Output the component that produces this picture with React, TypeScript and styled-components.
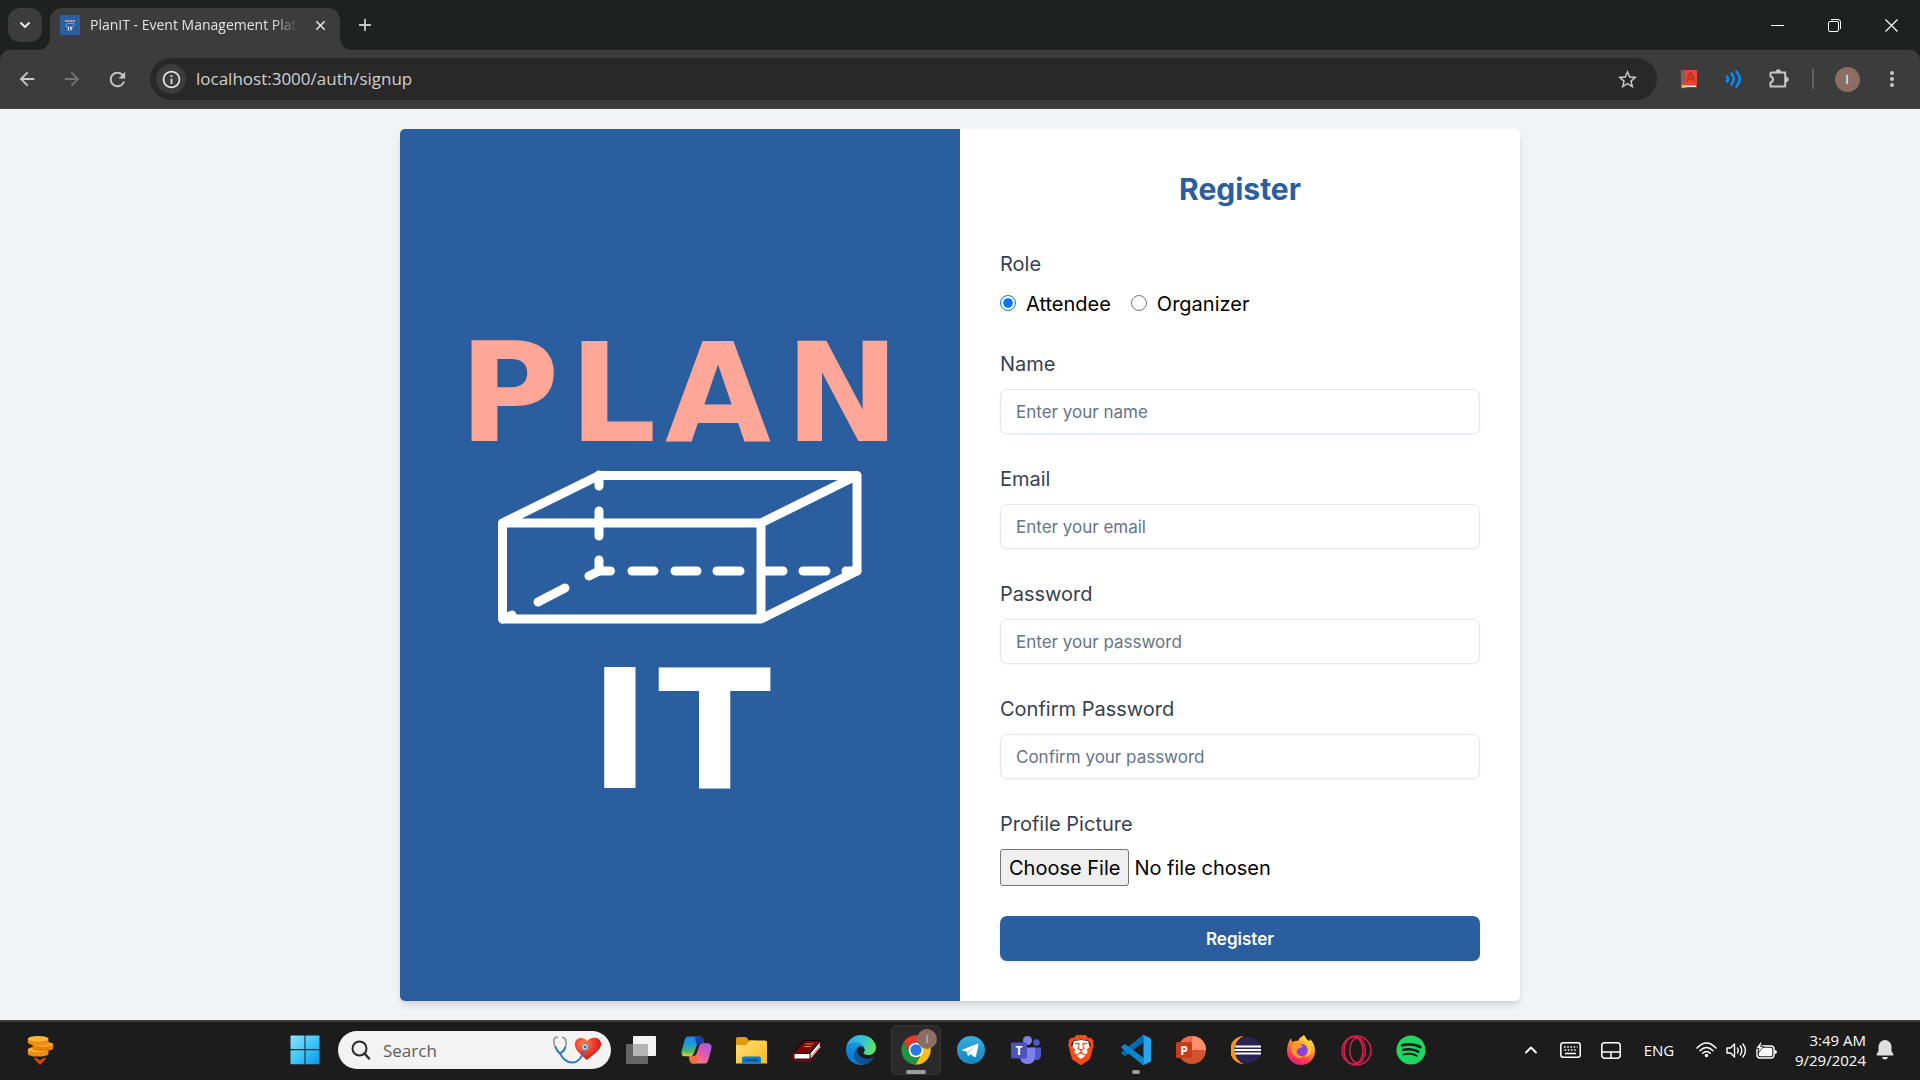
import React, { useState } from "react";
import styled, { createGlobalStyle } from "styled-components";
import { MdArrowBack, MdArrowForward, MdMoreVert, MdOutlineInfo, MdRefresh, MdStarBorder } from "react-icons/md";
import { FaSpotify } from "react-icons/fa";
import { SiBrave } from "react-icons/si";
import { ChevronDown, ChevronUp, Plus, X } from "lucide-react";

const brand = "#2a5e9f";
const uiFont = `"Open Sans", "Noto Sans", sans-serif`;

const GlobalStyle = createGlobalStyle`
  *, *::before, *::after { box-sizing: border-box; }
  body { margin: 0; font-family: Inter, "Liberation Sans", sans-serif; background: #f2f3f5; }
  button, input { font: inherit; color: inherit; }
  svg { display: block; flex: none; }
`;

const Screen = styled.div`
  min-height: 100vh;
  display: flex;
  flex-direction: column;
`;

/* ---------- browser window ---------- */

const BrowserHeader = styled.header`
  background: #1f2120;
  font-family: ${uiFont};
`;

const TabStrip = styled.div`
  height: 50px;
  padding-left: 8px;
  display: flex;
  align-items: center;
`;

const GhostButton = styled.button<{ $size?: number; $color?: string }>`
  width: ${(p) => p.$size ?? 34}px;
  height: ${(p) => p.$size ?? 34}px;
  padding: 0;
  border: 0;
  border-radius: 50%;
  background: transparent;
  color: ${(p) => p.$color ?? "#c7c7c7"};
  display: flex;
  align-items: center;
  justify-content: center;
  flex: none;
`;

const TabSearch = styled(GhostButton)`
  border-radius: 12px;
  background: #3c3c3c;
  color: #e8e8e8;
`;

const Tab = styled.div`
  position: relative;
  align-self: flex-end;
  width: 290px;
  height: 42px;
  margin: 0 8px;
  padding: 0 8px 8px 10px;
  border-radius: 12px 12px 0 0;
  background: #3c3c3c;
  display: flex;
  align-items: center;
  gap: 10px;

  &::before,
  &::after {
    content: "";
    position: absolute;
    bottom: 0;
    width: 12px;
    height: 12px;
  }
  &::before {
    right: 100%;
    background: radial-gradient(circle at 0 0, transparent 12px, #3c3c3c 12px);
  }
  &::after {
    left: 100%;
    background: radial-gradient(circle at 100% 0, transparent 12px, #3c3c3c 12px);
  }
`;

const TabTitle = styled.span`
  flex: 1;
  min-width: 0;
  white-space: nowrap;
  font-size: 14px;
  line-height: 22px;
  color: #e3e3e3;
  mask-image: linear-gradient(to right, #000 88%, transparent);
`;

const WindowControls = styled.div`
  margin-left: auto;
  height: 100%;
  display: flex;
`;

const WindowButton = styled.button`
  width: 57px;
  padding: 0;
  border: 0;
  background: transparent;
  color: #fff;
  display: flex;
  align-items: center;
  justify-content: center;
`;

const Toolbar = styled.div`
  height: 59px;
  padding: 0 11px 0 10px;
  border-radius: 10px 10px 0 0;
  border-bottom: 1px solid #4a4a4a;
  background: #3c3c3c;
  display: flex;
  align-items: center;
`;

const NavButtons = styled.div`
  display: flex;
  gap: 11px;
  margin-right: 16px;
`;

const Omnibox = styled.div`
  flex: 1;
  height: 42px;
  padding: 0 13px 0 6px;
  border-radius: 21px;
  background: #282828;
  display: flex;
  align-items: center;
`;

const SiteInfo = styled(GhostButton)`
  background: #3c3c3c;
  color: #e3e3e3;
`;

const AddressInput = styled.input`
  flex: 1;
  min-width: 0;
  padding: 0;
  margin: 0 10px;
  border: 0;
  outline: 0;
  font-size: 17px;
  line-height: 26px;
  color: #d0d0d0;
  background: transparent;
`;

const Extensions = styled.div`
  margin-left: 15px;
  display: flex;
  align-items: center;
  gap: 11px;
`;

const Divider = styled.span`
  width: 2px;
  height: 20px;
  margin: 0 5px;
  background: #5f5f5f;
`;

const Avatar = styled.span`
  width: 25px;
  height: 25px;
  border-radius: 50%;
  background: #8d6e63;
  color: #fff;
  font-size: 13px;
  line-height: 25px;
  text-align: center;
`;

/* ---------- sign-up page ---------- */

const Page = styled.main`
  flex: 1;
  padding: 20px 20px 16px;
  display: flex;
  justify-content: center;
  align-items: flex-start;
  background: #f2f3f5;
`;

const Card = styled.section`
  width: 100%;
  max-width: 1120px;
  border-radius: 5px;
  overflow: hidden;
  background: #fff;
  box-shadow: 0 5px 8px -1px rgba(0, 0, 0, 0.1), 0 2px 5px -2px rgba(0, 0, 0, 0.1);
  display: grid;
  grid-template-columns: 1fr 1fr;
`;

const BrandPanel = styled.div`
  background: ${brand};
  display: flex;
  align-items: center;
  justify-content: center;
`;

const Form = styled.form`
  padding: 40px;
  display: flex;
  flex-direction: column;
  gap: 30px;
`;

const Title = styled.h1`
  margin: 0 0 10px;
  font-size: 30px;
  line-height: 40px;
  font-weight: 700;
  text-align: center;
  color: ${brand};
`;

const Field = styled.div`
  display: flex;
  flex-direction: column;
  gap: 10px;
`;

const FieldSet = styled.fieldset`
  margin: 0;
  padding: 0;
  border: 0;
`;

const labelText = `
  font-size: 20px;
  line-height: 30px;
  color: #374151;
`;

const Label = styled.label`
  ${labelText}
`;

const Legend = styled.legend`
  ${labelText}
  padding: 0;
  margin-bottom: 10px;
`;

const Options = styled.div`
  display: flex;
  gap: 20px;
`;

const Option = styled.label`
  display: flex;
  align-items: center;
  gap: 10px;
  font-size: 20px;
  line-height: 30px;
  color: #000;
`;

const Radio = styled.input`
  width: 16px;
  height: 16px;
  margin: 0 0 3px;
`;

const TextInput = styled.input`
  width: 100%;
  height: 45px;
  padding: 0 15px;
  border: 1px solid #e2e8f0;
  border-radius: 7px;
  background: #fff;
  box-shadow: 0 1px 3px rgba(0, 0, 0, 0.05);
  font-size: 17px;
  color: #0f172a;

  &::placeholder {
    color: #64748b;
    opacity: 1;
  }
`;

const FileInput = styled.input`
  height: 37px;
  font-size: 20px;
  line-height: 30px;
  color: #000;

  &::file-selector-button {
    height: 37px;
    margin: 0 5px 0 0;
    padding: 0 8px;
    border: 1px solid #767676;
    border-radius: 3px;
    background: #efefef;
    color: #000;
    font: inherit;
  }
`;

const SubmitButton = styled.button`
  height: 45px;
  border: 0;
  border-radius: 7px;
  background: ${brand};
  color: #fff;
  font-size: 17px;
  font-weight: 600;
  box-shadow: 0 1px 3px rgba(0, 0, 0, 0.1);
`;

/* ---------- taskbar ---------- */

const Taskbar = styled.footer`
  height: 60px;
  background: #1c1c1c;
  box-shadow: inset 0 2px #3a3a3a;
  font-family: ${uiFont};
  color: #fff;
  display: flex;
  align-items: center;
`;

const Widgets = styled.div`
  width: 280px;
  padding-left: 15px;
  flex: 0 1 auto;
`;

const Apps = styled.nav`
  display: flex;
  align-items: center;
  gap: 5px;
`;

const AppButton = styled.button<{ $active?: boolean }>`
  position: relative;
  width: 50px;
  height: 50px;
  padding: 0;
  border: 1px solid ${(p) => (p.$active ? "#343434" : "transparent")};
  border-radius: 6px;
  background: ${(p) => (p.$active ? "#2a2a2a" : "transparent")};
  display: flex;
  align-items: center;
  justify-content: center;
  flex: none;
`;

const RunningMark = styled.span<{ $width: number }>`
  position: absolute;
  bottom: 0;
  left: 50%;
  width: ${(p) => p.$width}px;
  height: 4px;
  margin-left: ${(p) => -p.$width / 2}px;
  border-radius: 2px;
  background: #9d9d9d;
`;

const ProfileBadge = styled.span`
  position: absolute;
  top: 3px;
  right: 3px;
  width: 20px;
  height: 20px;
  border-radius: 50%;
  background: #8d6e63;
  color: #d8c8c2;
  font-size: 11px;
  line-height: 20px;
`;

const SearchBox = styled.label`
  width: 273px;
  height: 38px;
  margin: 0 0 0 3px;
  padding: 0 9px 0 13px;
  border-radius: 19px;
  background: #f3f3f3;
  display: flex;
  align-items: center;
  gap: 12px;
`;

const SearchInput = styled.input`
  flex: 1;
  min-width: 0;
  padding: 0;
  border: 0;
  outline: 0;
  background: transparent;
  font-size: 17px;
  color: #5c5c5c;

  &::placeholder {
    color: #5c5c5c;
    opacity: 1;
  }
`;

const Tray = styled.div`
  margin-left: auto;
  padding-right: 24px;
  display: flex;
  align-items: center;
`;

const TrayButton = styled.button<{ $width?: number }>`
  min-width: ${(p) => p.$width ?? 40}px;
  height: 40px;
  padding: 0;
  border: 0;
  background: transparent;
  font-size: 15px;
  color: #fff;
  display: flex;
  align-items: center;
  justify-content: center;
  gap: 9px;
`;

const Clock = styled.time`
  margin: 0 8px;
  font-size: 15px;
  line-height: 20px;
  text-align: right;
`;

/* ---------- drawings ---------- */

const PlanItLogo = () => (
  <svg width="480" height="530" viewBox="440 300 480 530" role="img" aria-label="Plan It">
    <g fontFamily="DejaVu Sans, Verdana, sans-serif" fontWeight="700">
      <text x="459 569 665 785" y="441" fontSize="137" fill="#fea698">PLAN</text>
      <text x="589 658" y="788" fontSize="166" fill="#fff">IT</text>
    </g>
    <g fill="none" stroke="#fff" strokeWidth="9" strokeLinejoin="round" strokeLinecap="round">
      <path d="M502.5 523H761V619H502.5Z M502.5 523L599 475.500H857V571L761 619 M761 523L857 475.500" />
      <path d="M599 475V486 M599 511V536 M599 560V571H610.500 M632 571H654 M675 571H697 M717 571H740 M765 571H783 M803 571H826 M846 571H857" />
      <path d="M599 571L589 576 M565 588L538 602 M512 615L503 619" />
    </g>
  </svg>
);

const Favicon = () => (
  <svg width="20" height="20" viewBox="0 0 20 20">
    <rect width="20" height="20" fill={brand} />
    <path d="M5 6h10" stroke="#c99aa6" strokeWidth="2" strokeDasharray="2 .6" />
    <path d="M6 9.500l2-1h6v2l-2 1.500H6z" fill="none" stroke="#9db8d8" strokeWidth=".7" />
    <path d="M8.500 12.500v3M11 12.500v3M10 12.800h2.400" stroke="#fff" strokeWidth="1.100" />
  </svg>
);

const RestoreIcon = () => (
  <svg width="13" height="13" viewBox="0 0 13 13" fill="none" stroke="#fff">
    <rect x=".5" y="2.500" width="10" height="10" rx="1.500" />
    <path d="M3 .5h7a2.500 2.500 0 0 1 2.500 2.500v7" />
  </svg>
);

const DictionaryIcon = () => (
  <svg width="18" height="20" viewBox="0 0 20 22">
    <rect x="1" y="1" width="18" height="20" rx="1" fill="#c5281c" />
    <rect x="1" y="1" width="4" height="20" fill="#6b6b6b" />
    <rect x="5" y="1" width="14" height="16.500" fill="#e94335" />
    <path d="M7.500 14L11 4.500h1.500L16 14M9 11h5.500" stroke="#bb3025" strokeWidth="1.800" fill="none" />
    <path d="M6 19h12" stroke="#fff" strokeWidth="1.600" />
    <path d="M2 17.500h4.500v4l-2-1-2.500 1z" fill="#f2b630" />
  </svg>
);

const WavesIcon = () => (
  <svg width="20" height="20" viewBox="0 0 20 20" fill="none" stroke="#0a8bf5" strokeWidth="2.600" strokeLinecap="round">
    <path d="M3 7.500q2 2.500 0 5" />
    <path d="M7.500 4.500q4.500 5.500 0 11" />
    <path d="M12.500 2.500q6.500 7.500 0 15" />
  </svg>
);

const PuzzleIcon = () => (
  <svg width="22" height="22" viewBox="0 0 22 22">
    <path
      d="M3.500 4.500H17.200V18.500H2.500V14.400Q5 14 5 11.500T2.500 8.600V5.500Q2.500 4.500 3.500 4.500Z"
      fill="none"
      stroke="#c7c7c7"
      strokeWidth="2"
      strokeLinejoin="round"
    />
    <path d="M8 4a2.300 2.300 0 0 1 4.600 0zM18 9.200a2.300 2.300 0 0 1 0 4.600z" fill="#c7c7c7" stroke="#c7c7c7" />
  </svg>
);

const CoinsIcon = () => (
  <svg width="30" height="30" viewBox="0 0 30 32">
    <path d="M2 15v5c0 4 22 4 22 0v-5z" fill="#f08c12" />
    <ellipse cx="13" cy="15.500" rx="11" ry="3" fill="#ffb02e" />
    <path d="M7 9v5c0 4 22 4 22 0V9z" fill="#e57f0c" />
    <ellipse cx="18" cy="10" rx="11" ry="3" fill="#ffa21f" />
    <path d="M2 4v4c0 4 22 4 22 0V4z" fill="#f08c12" />
    <ellipse cx="13" cy="4" rx="11" ry="3" fill="#ffb938" />
    <path d="M10 24l5 3 5-3q2 1 0 3l-5 5-5-5q-2-2 0-3z" fill="#d5440f" />
  </svg>
);

const WindowsIcon = () => (
  <svg width="30" height="30" viewBox="0 0 30 30">
    <defs>
      <linearGradient id="win" x1="0" y1="0" x2="1" y2="1" gradientUnits="objectBoundingBox">
        <stop offset="0" stopColor="#8be2fb" />
        <stop offset=".5" stopColor="#3ec8fb" />
        <stop offset="1" stopColor="#0896fa" />
      </linearGradient>
    </defs>
    <path d="M1 .5h13.500V14H.5V1zM15.500.5H29l.5.5v13h-14zM.5 15.200h14v14H1l-.5-.5zM15.500 15.200h14v13.500l-.5.500H15.500z" fill="url(#win)" />
  </svg>
);

const MagnifierIcon = () => (
  <svg width="20" height="20" viewBox="0 0 20 20" fill="none" stroke="#2b2b2b" strokeWidth="2" strokeLinecap="round">
    <circle cx="8.500" cy="8.500" r="7" />
    <path d="M13.500 13.500L18 18.500" strokeWidth="2.400" />
  </svg>
);

const HeartIcon = () => (
  <svg width="50" height="28" viewBox="0 0 50 28">
    <defs>
      <radialGradient id="heart" cx=".35" cy=".3" r=".8">
        <stop offset="0" stopColor="#ff8a5c" />
        <stop offset=".5" stopColor="#ee3a2a" />
        <stop offset="1" stopColor="#b80f14" />
      </radialGradient>
    </defs>
    <path d="M35 24C26 17 22 12 23 7C24 2 31 0 35 5C40 0 48 1 49 7C50 13 43 17 35 24Z" fill="url(#heart)" />
    <path d="M6 1.500Q1 0 2 7Q3 14 8 17Q13 16 14 9Q14.500 1 10 1.500" fill="none" stroke="#8b9098" strokeWidth="1.600" />
    <path d="M3.500 10.500Q5 15.500 8 17.500Q12 15.500 13.200 11M8 17.500Q13 27 21 26.500Q29 26 32.500 12.500" fill="none" stroke="#2f78bd" strokeWidth="1.800" />
    <circle cx="33" cy="11" r="3.600" fill="#c3cad2" stroke="#6d7680" />
    <circle cx="33" cy="11" r="1.300" fill="#59636e" />
  </svg>
);

const TaskViewIcon = () => (
  <svg width="30" height="30" viewBox="0 0 30 30">
    <rect x="0" y="9" width="22" height="20" rx="1" fill="#666" />
    <rect x="7" y="1" width="23" height="20" rx="1" fill="#f3f3f3" />
    <path d="M7 9h15v12H7z" fill="#b5b5b5" />
  </svg>
);

const CopilotIcon = () => (
  <svg width="31" height="28" viewBox="0 0 32 28">
    <defs>
      <linearGradient id="copA" x1="0" y1="0" x2="0" y2="1">
        <stop offset="0" stopColor="#1a86ee" />
        <stop offset=".45" stopColor="#1f9fd0" />
        <stop offset=".75" stopColor="#4fb56a" />
        <stop offset="1" stopColor="#e8d52a" />
      </linearGradient>
      <linearGradient id="copB" x1="1" y1="0" x2="0" y2="1">
        <stop offset="0" stopColor="#9a5cf0" />
        <stop offset=".5" stopColor="#ea5aa5" />
        <stop offset="1" stopColor="#ff9a4a" />
      </linearGradient>
    </defs>
    <path d="M7 0H19Q22 0 23 3L24 7H20Q17 7 16 10L13 18Q12 20.500 9 20.500H4Q-1 20 1 14L4 3Q5 0 7 0Z" fill="url(#copA)" />
    <path d="M16 0H19Q22 0 23 3L24 7H20Q17.500 7 16.500 9L15 5Q14 1 16 0Z" fill="#143fae" />
    <path d="M25 28H13Q10 28 9 25L8 20.500H12Q15 20.500 16 18L19 9Q20 7 23 7H28Q33 8 31 14L28 25Q27 28 25 28Z" fill="url(#copB)" />
    <path d="M14 28H13Q10 28 9 25L8 20.500H12Q14.500 20.500 15.500 19L17 23Q18 28 14 28Z" fill="#f36a3d" />
  </svg>
);

const ExplorerIcon = () => (
  <svg width="31" height="27" viewBox="0 0 31 27">
    <defs>
      <linearGradient id="folder" x1="0" y1="0" x2="1" y2="1">
        <stop offset="0" stopColor="#ffe07a" />
        <stop offset="1" stopColor="#fcb91a" />
      </linearGradient>
    </defs>
    <path d="M0 2Q0 0 2 0H10L13 3.500H20V12H0Z" fill="#dd9c08" />
    <path d="M0 8H10L14 3.500H29Q31 3.500 31 5.500V26.500H0Z" fill="url(#folder)" />
    <path d="M6 26.500V21.500Q6 19.500 8 19.500H23Q25 19.500 25 21.500V26.500Z" fill="#0b7bd0" />
    <path d="M9.500 23H21.500" stroke="#07477d" strokeWidth="1.400" strokeLinecap="round" />
  </svg>
);

const BookIcon = () => (
  <svg width="31" height="23" viewBox="0 0 31 23" strokeLinejoin="round">
    <path d="M3 13.500L13 1.500H30L19 14Z" fill="#7c0806" stroke="#000" />
    <path d="M19.500 14.500L30 2Q27.500 5 29.500 8.500L20 20Z" fill="#f4f4f4" />
    <path d="M20.500 17L28.500 7M20.500 19L29 9" stroke="#777" strokeWidth=".7" />
    <path d="M3.500 15H18.500V19.500H3.500Z" fill="#fff" />
    <path d="M19 14H4Q.5 14.500 1 18Q1.500 21 4 21.500H19L29.500 9" fill="none" stroke="#7c0806" strokeWidth="1.500" />
    <path d="M14.500 5H22.500M13 7.500H20.500" stroke="#c98a18" strokeWidth="1.200" />
  </svg>
);

const EdgeIcon = () => (
  <svg width="30" height="30" viewBox="0 0 256 256">
    <defs>
      <linearGradient id="edgeA" x1="0" y1=".5" x2="1" y2=".5">
        <stop offset="0" stopColor="#0c59a4" />
        <stop offset="1" stopColor="#114a8b" />
      </linearGradient>
      <linearGradient id="edgeB" x1=".6" y1="0" x2=".3" y2="1">
        <stop offset="0" stopColor="#1b9de2" />
        <stop offset=".5" stopColor="#1183d8" />
        <stop offset="1" stopColor="#0078d4" />
      </linearGradient>
      <linearGradient id="edgeC" x1="0" y1=".3" x2="1" y2=".6">
        <stop offset="0" stopColor="#35a8f0" />
        <stop offset=".5" stopColor="#2fc3d8" />
        <stop offset="1" stopColor="#6be455" />
      </linearGradient>
    </defs>
    <path fill="url(#edgeA)" d="M231 190.500a93.700 93.700 0 0 1-10.500 4.700 101.900 101.900 0 0 1-35.900 6.500c-47.300 0-88.500-32.500-88.500-74.300a31.500 31.500 0 0 1 16.400-27.300c-42.800 1.800-53.800 46.400-53.800 72.500 0 73.900 68.100 81.400 82.800 81.400 7.900 0 19.800-2.300 27-4.600l1.300-.4a128.300 128.300 0 0 0 66.600-52.800 4 4 0 0 0-5.400-5.700z" />
    <path fill="url(#edgeB)" d="M105.700 241.400a79.200 79.200 0 0 1-22.700-21.300 80.700 80.700 0 0 1 29.500-120c3.100-1.500 8.500-4.100 15.500-4a32.400 32.400 0 0 1 25.700 13 31.900 31.900 0 0 1 6.400 18.700c0-.2 24.500-79.600-80-79.600-43.900 0-80 41.700-80 78.200a130.200 130.200 0 0 0 12.100 56 128 128 0 0 0 156.400 67.100 75.600 75.600 0 0 1-62.800-8z" />
    <path fill="url(#edgeC)" d="M152.300 148.900c-.8 1-3.300 2.500-3.300 5.700 0 2.600 1.700 5.100 4.700 7.200 14.400 10 41.500 8.700 41.600 8.700a59.600 59.600 0 0 0 30.300-8.400A61.400 61.400 0 0 0 256 109.200c.3-22.400-8-37.300-11.300-43.900C223.500 23.800 177.700 0 128 0A128 128 0 0 0 0 126.200c.5-36.500 36.800-66 80-66 3.500 0 23.500.3 42 10 16.300 8.600 24.900 19 30.900 29.300 6.200 10.700 7.300 24.200 7.300 29.500s-2.700 13.300-7.900 19.900z" />
  </svg>
);

const ChromeIcon = () => (
  <svg width="32" height="32" viewBox="0 0 48 48">
    <path d="M5.540 12.030A22 22 0 0 1 43.600 14H24L15.340 29Z" fill="#e33b2e" />
    <path d="M43.600 14A22 22 0 0 1 22.860 45.970L32.660 29L24 14Z" fill="#fbc116" />
    <path d="M22.860 45.970A22 22 0 0 1 5.540 12.030L15.340 29H32.660Z" fill="#229342" />
    <circle cx="24" cy="24" r="11" fill="#fff" />
    <circle cx="24" cy="24" r="8.500" fill="#2a78e8" />
  </svg>
);

const TelegramIcon = () => (
  <svg width="28" height="28" viewBox="0 0 28 28">
    <defs>
      <linearGradient id="tg" x1="0" y1="0" x2="0" y2="1">
        <stop offset="0" stopColor="#37aee2" />
        <stop offset="1" stopColor="#1583bd" />
      </linearGradient>
    </defs>
    <circle cx="14" cy="14" r="14" fill="url(#tg)" />
    <path d="M5 13.800L20.500 7.800Q21.600 7.600 21.400 9L19 20.300Q18.600 21.500 17.400 20.900L13.500 18L11.600 19.900Q11 20.300 10.800 19.500L9.500 15.600L5.400 14.400Q4.500 14.100 5 13.800Z" fill="#fff" />
    <path d="M9.500 15.600L18.300 9.900L11.700 16.300L11.300 19.800Z" fill="#b9d6e8" />
  </svg>
);

const TeamsIcon = () => (
  <svg width="30" height="28" viewBox="0 0 30 28">
    <circle cx="25.500" cy="6.500" r="3.200" fill="#5059c9" />
    <path d="M20 11.500H30V19Q30 24 25 24Q21 24 20 20Z" fill="#5059c9" />
    <circle cx="16.500" cy="4.500" r="4.500" fill="#7b83eb" />
    <path d="M9 11.500H24V20Q24 28 16.500 28Q9 28 9 20Z" fill="#7b83eb" />
    <rect y="6.500" width="16" height="16" rx="1.500" fill="#4b53bc" />
    <text x="8" y="19" textAnchor="middle" fontFamily="Open Sans, sans-serif" fontSize="12" fontWeight="700" fill="#fff">T</text>
  </svg>
);

const BraveIcon = () => (
  <svg width="30" height="30" viewBox="0 0 30 30">
    <path d="M8 6L15 5L22 6L24 13L21 21L15 26L9 21L6 13Z" fill="#fff" />
    <SiBrave size={30} color="#fb4a16" />
  </svg>
);

const VsCodeIcon = () => (
  <svg width="30" height="30" viewBox="0 0 100 100">
    <path d="M2 62L9 68Q12 71 16 68L76 23V0Q72 0 69 3L2 57Q-1 59 2 62Z" fill="#0769b0" />
    <path d="M2 38L9 32Q12 29 16 32L76 77V100Q72 100 69 97L2 43Q-1 41 2 38Z" fill="#0a86d1" />
    <path d="M76 0L97 10Q100 12 100 15V85Q100 88 97 90L76 100Q72 101 69 98Q75 101 75 94V6Q75 -1 69 2Q72 -1 76 0Z" fill="#25a5ee" />
  </svg>
);

const PowerPointIcon = () => (
  <svg width="30" height="28" viewBox="0 0 30 28">
    <circle cx="16" cy="14" r="14" fill="#d35230" />
    <path d="M16 0A14 14 0 0 0 2 14H16Z" fill="#ed6c47" />
    <path d="M16 0A14 14 0 0 1 30 14H16Z" fill="#ff8f6b" />
    <rect y="6" width="16" height="16" rx="1.500" fill="#c43e1c" />
    <text x="8" y="18.500" textAnchor="middle" fontFamily="Open Sans, sans-serif" fontSize="12" fontWeight="700" fill="#fff">P</text>
  </svg>
);

const EclipseIcon = () => (
  <svg width="30" height="28" viewBox="0 0 30 28">
    <path d="M13 0A14 14 0 0 0 13 28A15 15 0 0 1 13 0Z" fill="#f7941e" />
    <circle cx="17" cy="14" r="13" fill="#2c2255" />
    <path d="M4 10.500H30M3.500 14H30M4 17.500H30" stroke="#fff" strokeWidth="2" />
  </svg>
);

const FirefoxIcon = () => (
  <svg width="30" height="30" viewBox="0 0 30 30">
    <defs>
      <linearGradient id="fox" x1=".8" y1="0" x2=".3" y2="1">
        <stop offset="0" stopColor="#fff44f" />
        <stop offset=".4" stopColor="#ff9a2a" />
        <stop offset=".75" stopColor="#ff3b4f" />
        <stop offset="1" stopColor="#e3158a" />
      </linearGradient>
    </defs>
    <path d="M18 0Q20 4 23 6Q24 6 24 4Q29 9 29 16A14 14 0 0 1 1 16Q1 9 5 3Q5 6 7 7Q9 5 12 6Q14 2 18 0Z" fill="url(#fox)" />
    <circle cx="15.500" cy="15" r="6" fill="#8a3fe0" />
    <path d="M5 11Q9 8 13 9L17 11Q15 13 12.500 13.500Q10 15 11 18Q13 22 18 21Q12 26 7.500 20Q4.500 16 5 11Z" fill="#ff9a2a" />
    <path d="M17 6Q23 8 23 15Q22 20 18 22Q23 22 25 17Q26 11 22 6Q19 4 18 2Z" fill="#ffd23e" />
  </svg>
);

const OperaGxIcon = () => (
  <svg width="31" height="31" viewBox="0 0 31 31" fill="none" stroke="#e0204e" strokeWidth="1.400">
    <circle cx="15.500" cy="15.500" r="14.500" />
    <ellipse cx="12.500" cy="15.500" rx="9.500" ry="13.700" />
    <ellipse cx="16.500" cy="15.500" rx="7.800" ry="12.500" />
  </svg>
);

const KeyboardIcon = () => (
  <svg width="21" height="16" viewBox="0 0 21 16" fill="none" stroke="#fff" strokeWidth="1.500">
    <rect x=".8" y=".8" width="19.400" height="14.400" rx="2.500" />
    <path d="M4 5H17.500M4.500 8H17" strokeWidth="1.600" strokeDasharray="1.600 1.600" />
    <path d="M5 11.500H16" />
  </svg>
);

const TouchpadIcon = () => (
  <svg width="20" height="17" viewBox="0 0 20 17" fill="none" stroke="#fff" strokeWidth="1.500">
    <rect x=".8" y=".8" width="18.400" height="15.400" rx="3" />
    <path d="M1 10H19M10 10V16" />
  </svg>
);

const WifiIcon = () => (
  <svg width="21" height="16" viewBox="0 0 21 16" fill="none" stroke="#fff" strokeWidth="1.500" strokeLinecap="round">
    <path d="M1 6Q10.500 -4 20 6M4 8.700Q10.500 2.200 17 8.700M6.700 11.300Q10.500 7.700 14.300 11.300" />
    <circle cx="10.500" cy="13.500" r="1.700" fill="#fff" stroke="none" />
  </svg>
);

const VolumeIcon = () => (
  <svg width="21" height="17" viewBox="0 0 21 17" fill="none" stroke="#fff" strokeWidth="1.400" strokeLinecap="round" strokeLinejoin="round">
    <path d="M1 6H4.500L8.500 2V15L4.500 11H1Z" />
    <path d="M11.500 6Q13 8.500 11.500 11M14.300 4Q17.200 8.500 14.300 13M17 2Q21.800 8.500 17 15" />
  </svg>
);

const BatteryIcon = () => (
  <svg width="21" height="17" viewBox="0 0 21 17">
    <rect x="1" y="4" width="17" height="12" rx="3" fill="none" stroke="#fff" strokeWidth="1.400" />
    <rect x="2.800" y="5.800" width="13.400" height="8.400" rx="1.500" fill="#fff" />
    <path d="M18.500 8q2.500 0 2.500 2t-2.500 2z" fill="#fff" />
    <path d="M4.500 0L0 6.500H3L2 11.500L7.500 4.500H4.500L6 0Z" fill="#fff" stroke="#1c1c1c" strokeWidth=".8" />
  </svg>
);

const BellIcon = () => (
  <svg width="18" height="20" viewBox="0 0 18 20" fill="#dedede">
    <path d="M9 0A6.500 6.500 0 0 1 15.500 6.500V11L17.500 14.500Q17.500 15.500 16.500 15.500H1.500Q.5 15.500 .5 14.500L2.500 11V6.500A6.500 6.500 0 0 1 9 0ZM6 17H12Q11.500 19.500 9 19.500T6 17Z" />
  </svg>
);

/* ---------- content ---------- */

const textFields = [
  { id: "name", label: "Name", type: "text", placeholder: "Enter your name" },
  { id: "email", label: "Email", type: "email", placeholder: "Enter your email" },
  { id: "password", label: "Password", type: "password", placeholder: "Enter your password" },
  { id: "confirm", label: "Confirm Password", type: "password", placeholder: "Confirm your password" },
];

const roles = ["Attendee", "Organizer"];

const apps = [
  { name: "Task View", icon: <TaskViewIcon /> },
  { name: "Copilot", icon: <CopilotIcon /> },
  { name: "File Explorer", icon: <ExplorerIcon /> },
  { name: "Dictionary", icon: <BookIcon /> },
  { name: "Edge", icon: <EdgeIcon /> },
  { name: "Chrome", icon: <ChromeIcon />, active: true, mark: 20, badge: "I" },
  { name: "Telegram", icon: <TelegramIcon /> },
  { name: "Teams", icon: <TeamsIcon /> },
  { name: "Brave", icon: <BraveIcon /> },
  { name: "Visual Studio Code", icon: <VsCodeIcon />, mark: 8 },
  { name: "PowerPoint", icon: <PowerPointIcon /> },
  { name: "Eclipse", icon: <EclipseIcon /> },
  { name: "Firefox", icon: <FirefoxIcon /> },
  { name: "Opera GX", icon: <OperaGxIcon /> },
  { name: "Spotify", icon: <FaSpotify size={30} color="#1ed760" /> },
];

function Browser() {
  return (
    <BrowserHeader>
      <TabStrip>
        <TabSearch aria-label="Search tabs"><ChevronDown size={16} strokeWidth={3} /></TabSearch>
        <Tab>
          <Favicon />
          <TabTitle>PlanIT - Event Management Plat</TabTitle>
          <GhostButton $size={24} $color="#e3e3e3" aria-label="Close tab"><X size={15} strokeWidth={2.5} /></GhostButton>
        </Tab>
        <GhostButton aria-label="New tab"><Plus size={18} strokeWidth={2.5} /></GhostButton>
        <WindowControls>
          <WindowButton aria-label="Minimize">
            <svg width="13" height="1" viewBox="0 0 13 1"><path d="M0 .5H13" stroke="#fff" /></svg>
          </WindowButton>
          <WindowButton aria-label="Restore"><RestoreIcon /></WindowButton>
          <WindowButton aria-label="Close">
            <svg width="13" height="13" viewBox="0 0 13 13"><path d="M.5 .5L12.500 12.500M12.500 .5L.5 12.500" stroke="#fff" strokeWidth="1.200" /></svg>
          </WindowButton>
        </WindowControls>
      </TabStrip>
      <Toolbar>
        <NavButtons>
          <GhostButton aria-label="Back"><MdArrowBack size={22} /></GhostButton>
          <GhostButton aria-label="Forward" $color="#757575"><MdArrowForward size={22} /></GhostButton>
          <GhostButton aria-label="Reload"><MdRefresh size={23} /></GhostButton>
        </NavButtons>
        <Omnibox>
          <SiteInfo $size={30} aria-label="Site information"><MdOutlineInfo size={21} /></SiteInfo>
          <AddressInput aria-label="Address" defaultValue="localhost:3000/auth/signup" />
          <GhostButton aria-label="Bookmark"><MdStarBorder size={23} /></GhostButton>
        </Omnibox>
        <Extensions>
          <GhostButton aria-label="Dictionary extension"><DictionaryIcon /></GhostButton>
          <GhostButton aria-label="Read aloud extension"><WavesIcon /></GhostButton>
          <GhostButton aria-label="Extensions"><PuzzleIcon /></GhostButton>
          <Divider />
          <GhostButton aria-label="Profile"><Avatar>I</Avatar></GhostButton>
          <GhostButton aria-label="Menu"><MdMoreVert size={24} /></GhostButton>
        </Extensions>
      </Toolbar>
    </BrowserHeader>
  );
}

function SignUp() {
  const [role, setRole] = useState("Attendee");
  return (
    <Page>
      <Card>
        <BrandPanel><PlanItLogo /></BrandPanel>
        <Form onSubmit={(e: React.FormEvent) => e.preventDefault()}>
          <Title>Register</Title>
          <FieldSet>
            <Legend>Role</Legend>
            <Options>
              {roles.map((r) => (
                <Option key={r}>
                  <Radio type="radio" name="role" checked={role === r} onChange={() => setRole(r)} />
                  {r}
                </Option>
              ))}
            </Options>
          </FieldSet>
          {textFields.map((f) => (
            <Field key={f.id}>
              <Label htmlFor={f.id}>{f.label}</Label>
              <TextInput id={f.id} type={f.type} placeholder={f.placeholder} />
            </Field>
          ))}
          <Field>
            <Label htmlFor="picture">Profile Picture</Label>
            <FileInput id="picture" type="file" />
          </Field>
          <SubmitButton type="submit">Register</SubmitButton>
        </Form>
      </Card>
    </Page>
  );
}

function SystemBar() {
  return (
    <Taskbar>
      <Widgets><AppButton aria-label="Widgets"><CoinsIcon /></AppButton></Widgets>
      <Apps>
        <AppButton aria-label="Start"><WindowsIcon /></AppButton>
        <SearchBox>
          <MagnifierIcon />
          <SearchInput type="text" placeholder="Search" aria-label="Search" />
          <HeartIcon />
        </SearchBox>
        {apps.map((a) => (
          <AppButton key={a.name} aria-label={a.name} $active={a.active}>
            {a.icon}
            {a.badge && <ProfileBadge>{a.badge}</ProfileBadge>}
            {a.mark && <RunningMark $width={a.mark} />}
          </AppButton>
        ))}
      </Apps>
      <Tray>
        <TrayButton aria-label="Hidden icons"><ChevronUp size={20} strokeWidth={2.2} /></TrayButton>
        <TrayButton aria-label="Touch keyboard"><KeyboardIcon /></TrayButton>
        <TrayButton aria-label="Virtual touchpad"><TouchpadIcon /></TrayButton>
        <TrayButton $width={56}>ENG</TrayButton>
        <TrayButton $width={100} aria-label="Network, sound and battery">
          <WifiIcon />
          <VolumeIcon />
          <BatteryIcon />
        </TrayButton>
        <Clock>3:49 AM<br />9/29/2024</Clock>
        <TrayButton $width={22} aria-label="Notifications"><BellIcon /></TrayButton>
      </Tray>
    </Taskbar>
  );
}

export default function App() {
  return (
    <Screen>
      <GlobalStyle />
      <Browser />
      <SignUp />
      <SystemBar />
    </Screen>
  );
}
